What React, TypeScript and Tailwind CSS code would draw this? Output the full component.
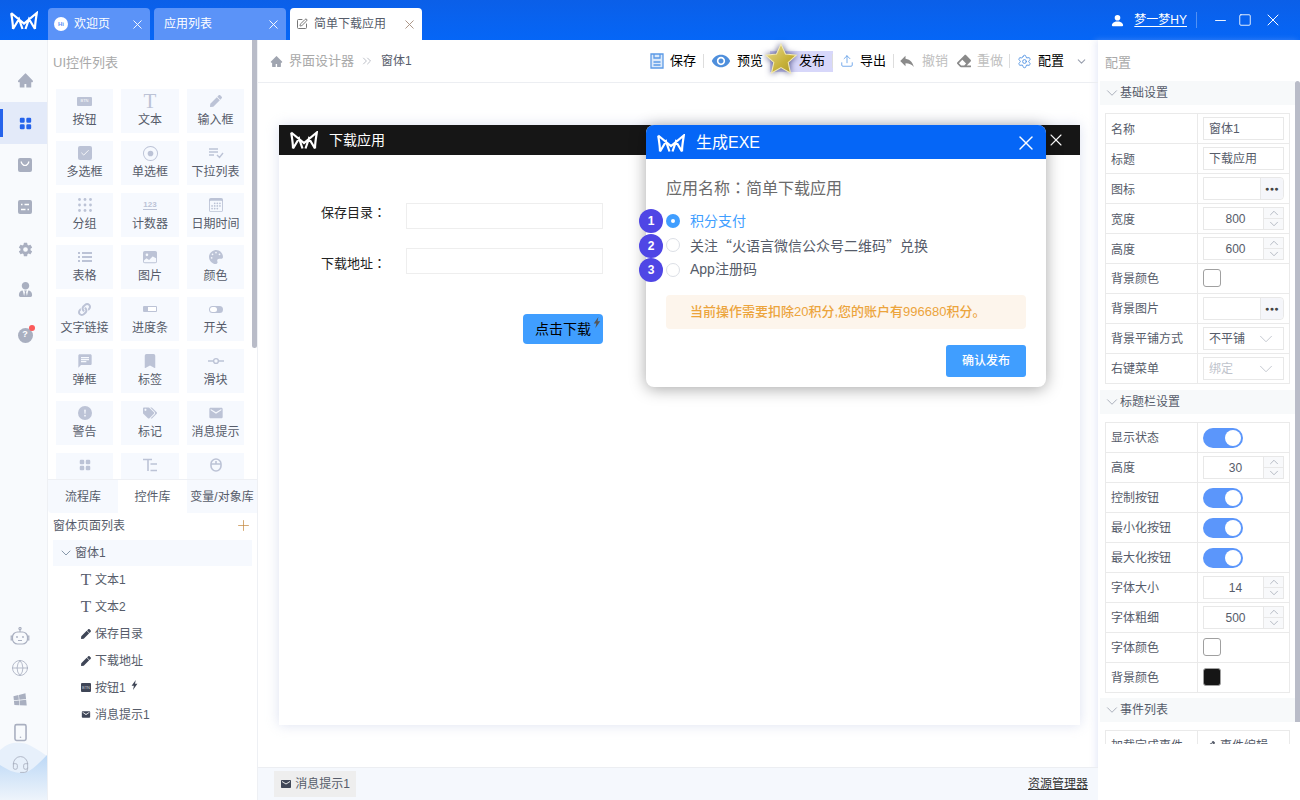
import React from 'react';
import { Check, ChevronDown, ChevronUp, ChevronsRight, Globe, Headset, Minus, Plus, Settings, Smartphone, Square, SquarePen, Upload, X } from 'lucide-react';
import { AiFillHome } from 'react-icons/ai';
import { BsBookmarkFill, BsCalendar3, BsExclamationCircleFill, BsGridFill, BsImageFill, BsPersonFill, BsRecordCircle } from 'react-icons/bs';
import { FaEraser, FaLink, FaPalette, FaPen, FaTags, FaUserTie, FaWindows } from 'react-icons/fa';
import { IoSettingsSharp } from 'react-icons/io5';
import { MdChat, MdEmail, MdReply, MdVisibility } from 'react-icons/md';

const Logo = ({ className }: { className?: string }) => (
    <svg viewBox="0 0 28 18" className={className} fill="none" stroke="currentColor" strokeWidth="2.2" strokeLinejoin="miter">
        <path d="M1.2 1.5 C2 7 3 12 3 17.5 M1.2 1.5 L14 12 L26.8 1.5 C26 7 25 12 25 17.5 M3 17.5 L9 7.5 L12.5 17.5 M25 17.5 L19 7.5 L15.5 17.5" />
    </svg>
);

const BtnIcon = ({ dark }: { dark?: boolean }) => (
    <span className={`flex h-[9px] w-[15px] items-center justify-center rounded-[1px] text-[4px] leading-none ${dark ? 'bg-[#3f4657] text-[#c8ccd6]' : 'bg-[#bcc3d6] text-white'}`}>BTN</span>
);

const SerifT = ({ className }: { className?: string }) => <span className={`font-['Liberation_Serif',serif] leading-none ${className}`}>T</span>;

const G = 'text-[#bcc3d6]';

const controls: Array<{ label: string; icon: React.ReactNode }> = [
    { label: '按钮', icon: <BtnIcon /> },
    { label: '文本', icon: <SerifT className={`text-[21px] ${G}`} /> },
    { label: '输入框', icon: <FaPen size={12} className={G} /> },
    { label: '多选框', icon: <span className="flex h-[14px] w-[14px] items-center justify-center rounded-[2px] bg-[#bcc3d6]"><Check size={10} strokeWidth={2} className="text-white" /></span> },
    { label: '单选框', icon: <BsRecordCircle size={15} className={G} /> },
    { label: '下拉列表', icon: <svg viewBox="0 0 16 12" className="h-3 w-4" fill="none" stroke="#bcc3d6" strokeWidth="1.4"><path d="M1 2h9M1 5h9M1 8h5M9 8l2.5 2.5L15 6" /></svg> },
    { label: '分组', icon: <svg viewBox="0 0 14 14" className="h-[14px] w-[14px]" fill="#bcc3d6">{[1.5, 7, 12.5].flatMap(y => [1.5, 7, 12.5].map(x => <circle key={`${x}-${y}`} cx={x} cy={y} r="1.4" />))}</svg> },
    { label: '计数器', icon: <span className="border-b border-[#bcc3d6] text-[8px] leading-[9px] font-bold text-[#bcc3d6]">123</span> },
    { label: '日期时间', icon: <BsCalendar3 size={14} className={G} /> },
    { label: '表格', icon: <svg viewBox="0 0 14 12" className="h-3 w-[14px]" fill="#bcc3d6"><path d="M0 1h2v2H0zM4 1h10v2H4zM0 5h2v2H0zM4 5h10v2H4zM0 9h2v2H0zM4 9h10v2H4z" /></svg> },
    { label: '图片', icon: <BsImageFill size={14} className={G} /> },
    { label: '颜色', icon: <FaPalette size={14} className={G} /> },
    { label: '文字链接', icon: <FaLink size={13} className={G} /> },
    { label: '进度条', icon: <span className="flex h-[6px] w-[14px] justify-end rounded-[1px] bg-[#bcc3d6] p-px"><span className="h-full w-2 bg-white" /></span> },
    { label: '开关', icon: <span className="flex h-[7px] w-[14px] items-center rounded-full bg-[#bcc3d6] p-px"><span className="h-[5px] w-[7px] rounded-full bg-white" /></span> },
    { label: '弹框', icon: <MdChat size={16} className={G} /> },
    { label: '标签', icon: <BsBookmarkFill size={14} className={G} /> },
    { label: '滑块', icon: <svg viewBox="0 0 16 8" className="h-2 w-4" fill="none" stroke="#bcc3d6" strokeWidth="1.4"><path d="M0 4h5M11 4h5" /><circle cx="8" cy="4" r="2.4" /></svg> },
    { label: '警告', icon: <BsExclamationCircleFill size={14} className={G} /> },
    { label: '标记', icon: <FaTags size={14} className={G} /> },
    { label: '消息提示', icon: <MdEmail size={16} className={G} /> },
    { label: '', icon: <BsGridFill size={12} className={G} /> },
    { label: '', icon: <svg viewBox="0 0 14 14" className="h-[14px] w-[14px]" fill="none" stroke="#bcc3d6" strokeWidth="1.6"><path d="M0 1.5h9M5 1.5V13M7.5 6H14M7.5 12.5H14" /></svg> },
    { label: '', icon: <svg viewBox="0 0 12 14" className="h-[14px] w-3" fill="none" stroke="#bcc3d6" strokeWidth="1.6"><rect x="1" y="1" width="10" height="12" rx="5" /><path d="M1 6h10M6 3v3" /></svg> },
];

const treeItems: Array<{ label: string; icon: React.ReactNode; bolt?: boolean }> = [
    { label: '文本1', icon: <SerifT className="text-[17px] text-[#5a6170]" /> },
    { label: '文本2', icon: <SerifT className="text-[17px] text-[#5a6170]" /> },
    { label: '保存目录', icon: <FaPen size={10} className="text-[#3f4657]" /> },
    { label: '下载地址', icon: <FaPen size={10} className="text-[#3f4657]" /> },
    { label: '按钮1', icon: <BtnIcon dark />, bolt: true },
    { label: '消息提示1', icon: <MdEmail size={13} className="text-[#3f4657]" /> },
];

const Bolt = ({ className }: { className?: string }) => (
    <svg viewBox="0 0 8 12" className={className} fill="currentColor"><path d="M5.5 0 0.5 7h2.8L2.2 12 7.5 4.6H4.6z" /></svg>
);

const Sep = ({ className }: { className?: string }) => <span className={`block h-[14px] w-px shrink-0 bg-[#ddd] ${className ?? ''}`} />;

const ToolBtn = ({ icon, label, disabled }: { icon: React.ReactNode; label: string; disabled?: boolean }) => (
    <span className={`flex items-center gap-[6px] text-[13px] ${disabled ? 'text-[#c0c0c0]' : 'text-black'}`}>
        {icon}
        {label}
    </span>
);

const Row = ({ label, lower, children }: { label: string; lower?: boolean; children?: React.ReactNode }) => (
    <div className="-mt-px flex h-[31px] border border-[#eaeaea] text-[12px] text-[#565c6a]">
        <div className={`flex w-[92px] items-center border-r border-[#eaeaea] pl-[5px] ${lower ? 'pt-[2px]' : ''}`}>{label}</div>
        <div className="flex flex-1 items-center pl-[5px]">{children}</div>
    </div>
);

const TextBox = ({ value }: { value: string }) => (
    <div className="flex h-[23px] w-[81px] items-center border border-[#e8e8e8] pl-[5px] text-[12px] text-[#565c6a]">{value}</div>
);

const PickBox = () => (
    <div className="flex h-[23px] w-[81px] justify-end rounded-r-[4px] border border-[#e8e8e8]">
        <span className="flex w-[23px] items-center justify-center rounded-r-[4px] border-l border-[#e8e8e8] bg-[#f5f6fa] text-[7px] leading-none tracking-[0.5px] text-[#444]">●●●</span>
    </div>
);

const SpinBox = ({ value }: { value: number }) => (
    <div className="flex h-[23px] w-[81px] border border-[#e8e8e8] text-[12px] text-[#565c6a]">
        <span className="flex flex-1 items-center justify-center pl-1 text-[12px]">{value}</span>
        <span className="flex w-[20px] flex-col border-l border-[#e8e8e8] bg-[#f8f9fb] text-[#9aa0ae]">
            <span className="flex h-[11px] items-center justify-center overflow-hidden border-b border-[#e8e8e8]"><ChevronUp size={14} strokeWidth={1.2} className="shrink-0" /></span>
            <span className="flex h-[10px] items-center justify-center overflow-hidden"><ChevronDown size={14} strokeWidth={1.2} className="shrink-0" /></span>
        </span>
    </div>
);

const SelectBox = ({ value, muted }: { value: string; muted?: boolean }) => (
    <div className={`flex h-[23px] w-[81px] items-center justify-between border border-[#e8e8e8] pr-[6px] pl-[5px] text-[12px] ${muted ? 'text-[#c0c4cc]' : 'text-[#565c6a]'}`}>
        {value}
        <ChevronDown size={22} strokeWidth={1} className="text-[#c0c4cc]" />
    </div>
);

const Toggle = () => (
    <span className="flex h-5 w-10 items-center justify-end rounded-full bg-[#5b96fb] pr-[2px]">
        <span className="h-4 w-4 rounded-full bg-white" />
    </span>
);

const Swatch = ({ dark }: { dark?: boolean }) => (
    <span className={`mb-[2px] h-[18px] w-[18px] rounded-[3px] border border-[#a0a0a0] ${dark ? 'bg-[#161616]' : 'bg-white'}`} />
);

const Section = ({ title }: { title: string }) => (
    <div className="flex h-6 items-center bg-[#f7f9fa] pl-[3px] text-[12px] text-[#565c6a]">
        <ChevronDown size={18} strokeWidth={1.1} className="-mr-px text-[#9aa0ae]" />
        {title}
    </div>
);

const Badge = ({ n, className }: { n: number; className: string }) => (
    <span className={`absolute left-[-7px] flex h-6 w-6 items-center justify-center rounded-full bg-[#4f46e5] text-[12px] font-bold text-white ${className}`}>{n}</span>
);

const Colon = () => <span className="font-['Noto_Sans_CJK_TC',sans-serif]">：</span>;

export default function App() {
    const railTop = [
        { icon: <AiFillHome size={17} className="mb-[2px]" /> },
        { icon: <BsGridFill size={13} className="text-[#2563eb]" />, active: true },
        { icon: <svg viewBox="0 0 14 14" className="h-[14px] w-[14px]"><path fill="#a9afc0" d="M2 0h10a2 2 0 0 1 2 2v10a2 2 0 0 1-2 2H2a2 2 0 0 1-2-2V2a2 2 0 0 1 2-2z" /><path d="M3 3.5c1 3 2.5 4 4 4s3-1 4-4" fill="none" stroke="#fff" strokeWidth="1.2" /></svg> },
        { icon: <svg viewBox="0 0 14 14" className="h-[14px] w-[14px]"><rect width="14" height="14" rx="2" fill="#a9afc0" /><path d="M3 4.5h1.5M6.5 4.5H11M3 9.5h4.5M9.5 9.5H11" stroke="#fff" strokeWidth="1.6" /></svg> },
        { icon: <IoSettingsSharp size={15} /> },
    ];

    return (
        <div className="flex h-[800px] w-[1300px] flex-col overflow-hidden bg-white font-['Liberation_Sans','Noto_Sans_CJK_SC',sans-serif]">
            <header className="flex h-10 shrink-0 items-end bg-gradient-to-b from-[#0b5fe8] to-[#0566f7] text-white">
                <div className="flex h-10 w-12 items-center pl-[10px]"><Logo className="h-[19px] w-[28px] text-white" /></div>
                <div className="flex items-center gap-1">
                    <div className="flex h-8 w-[102px] items-center rounded-t-[4px] bg-[#5b93f8] pr-[5px] pl-[6px] text-[12px]">
                        <span className="mr-[6px] flex h-[14px] w-[14px] items-center justify-center rounded-full bg-white text-[6px] font-bold text-[#5b93f8]">Hi</span>
                        <span className="flex-1">欢迎页</span>
                        <X size={15} strokeWidth={1.5} />
                    </div>
                    <div className="flex h-8 w-[132px] items-center rounded-t-[4px] bg-[#5b93f8] pr-[5px] pl-[10px] text-[12px]">
                        <span className="flex-1">应用列表</span>
                        <X size={15} strokeWidth={1.5} />
                    </div>
                    <div className="flex h-8 w-[132px] items-center rounded-t-[4px] bg-white pr-[5px] pl-[6px] text-[12px] text-[#565c6a]">
                        <SquarePen size={12} className="mr-[6px] text-[#777]" />
                        <span className="flex-1">简单下载应用</span>
                        <X size={15} strokeWidth={1.5} className="text-[#a89080]" />
                    </div>
                </div>
                <div className="ml-auto flex h-10 items-center">
                    <BsPersonFill size={15} className="mr-[9px]" />
                    <span className="text-[12px] underline underline-offset-2">梦一梦HY</span>
                    <span className="ml-[9px] h-4 w-px bg-white/30" />
                    <Minus size={17} className="ml-[15px]" strokeWidth={1.3} />
                    <Square size={14} className="ml-[9px]" strokeWidth={1.5} />
                    <X size={20} className="mr-[17px] ml-[11px]" strokeWidth={1.2} />
                </div>
            </header>

            <div className="flex min-h-0 flex-1">
                {/* icon rail */}
                <nav className="relative flex w-12 shrink-0 flex-col border-r border-[#eef0f4] bg-[#f8fafd] pt-5 text-[#a9afc0]">
                    {railTop.map((item, i) => (
                        <div key={i} className={`relative flex h-[42px] items-center justify-center pl-[3px] ${item.active ? 'bg-[#e3eaf9]' : ''}`}>
                            {item.active && <span className="absolute top-[7px] left-0 h-[28px] w-[3px] bg-[#2563eb]" />}
                            {item.icon}
                        </div>
                    ))}
                    <div className="flex h-[38px] items-center justify-center pl-[3px]"><FaUserTie size={15} /></div>
                    <div className="mt-[7px] flex h-[40px] items-center justify-center pl-[3px]">
                        <span className="relative flex h-[15px] w-[15px] items-center justify-center rounded-full bg-[#a9afc0] text-[9px] font-bold text-white">
                            ?
                            <span className="absolute -top-[3px] -right-[2px] h-[6px] w-[6px] rounded-full bg-[#fb5a5a]" />
                        </span>
                    </div>
                    <svg viewBox="0 0 47 58" className="absolute bottom-0 left-0 h-[58px] w-[47px]" preserveAspectRatio="none">
                        <defs>
                            <linearGradient id="wave" x1="0" y1="0" x2="0" y2="1">
                                <stop offset="0" stopColor="#bcd8f6" />
                                <stop offset="1" stopColor="#eef4fb" />
                            </linearGradient>
                        </defs>
                        <path d="M0 8C8 1 14 0 22 1S38 8 47 14V58H0z" fill="#e7f0fb" />
                        <path d="M0 23C8 28 14 31 22 31S38 22 47 13V58H0z" fill="url(#wave)" />
                    </svg>
                    <div className="relative mt-auto flex flex-col items-center pr-[7px] pb-[20px]">
                        <span className="flex h-8 items-center">
                            <svg viewBox="0 0 20 18" className="h-[18px] w-5" fill="none" stroke="#a9afc0" strokeWidth="1.2">
                                <circle cx="10" cy="1.6" r="1.1" />
                                <path d="M10 2.7V5" />
                                <rect x="2.5" y="5" width="15" height="12" rx="5" />
                                <path d="M2.5 9H1.2v4h1.3M17.5 9h1.3v4h-1.3M8 13.5h4" />
                                <circle cx="7" cy="10" r="0.9" fill="#a9afc0" stroke="none" />
                                <circle cx="13" cy="10" r="0.9" fill="#a9afc0" stroke="none" />
                            </svg>
                        </span>
                        <span className="flex h-8 items-center"><Globe size={18} strokeWidth={1.1} /></span>
                        <span className="flex h-8 items-center"><FaWindows size={14} className="-rotate-6" /></span>
                        <span className="flex h-8 items-center"><Smartphone size={19} strokeWidth={2} /></span>
                        <span className="flex h-8 items-center"><Headset size={19} strokeWidth={1.1} /></span>
                    </div>
                </nav>

                {/* widget panel */}
                <aside className="flex w-[210px] shrink-0 flex-col border-r border-[#eef0f4]">
                    <div className="relative h-[440px] overflow-hidden border-b border-[#eef0f4]">
                        <span className="absolute top-0 right-0 h-[308px] w-[5px] rounded-b-[3px] bg-[#b9bcc8]" />
                        <div className="pt-[14px] pl-[5px] text-[13px] leading-[17px] text-[#a9a9a9]">UI控件列表</div>
                        <div className="mt-[18px] ml-2 grid w-[188px] grid-cols-[57px_58px_57px] gap-x-2 gap-y-2">
                            {controls.map((c, i) => (
                                <div key={i} className="flex h-11 flex-col items-center bg-[#f6f9fe] pt-[4px] text-[12px] leading-[16px] text-[#565c6a]">
                                    <span className="flex h-[16px] items-center justify-center">{c.icon}</span>
                                    <span className="mt-[3px]">{c.label}</span>
                                </div>
                            ))}
                        </div>
                    </div>
                    <div className="flex h-[33px] text-[12px] text-[#565c6a]">
                        <div className="flex w-[70px] items-center justify-center rounded-bl-[4px] bg-[#f6f9fe]">流程库</div>
                        <div className="flex w-[69px] items-center justify-center">控件库</div>
                        <div className="flex w-[70px] items-center justify-center bg-[#f6f9fe] whitespace-nowrap">变量/对象库</div>
                    </div>
                    <div className="flex h-[27px] items-center justify-between pr-[5px] pb-[2px] pl-[5px] text-[12px] text-[#565c6a]">
                        窗体页面列表
                        <Plus size={17} strokeWidth={1} className="text-[#c4873c]" />
                    </div>
                    <div className="mx-[5px] flex h-[26px] items-center bg-[#f6f9fe] pl-[5px] text-[12px] text-[#565c6a]">
                        <ChevronDown size={16} strokeWidth={1.2} className="mr-px text-[#6c8096]" />
                        窗体1
                    </div>
                    <div className="pl-[33px] text-[12px] text-[#565c6a]">
                        {treeItems.map(t => (
                            <div key={t.label} className="flex h-[27px] items-center">
                                <span className="mr-[4px] flex w-[10px] justify-center">{t.icon}</span>
                                <span>{t.label}</span>
                                {t.bolt && <Bolt className="mb-[5px] ml-[5px] h-[10px] w-[7px] text-[#3f4657]" />}
                            </div>
                        ))}
                    </div>
                </aside>

                {/* designer */}
                <main className="relative flex min-w-0 flex-1 flex-col">
                    <div className="flex h-[43px] shrink-0 items-center justify-between border-b border-[#eceef2] pr-[10px] pl-[12px]">
                        <div className="flex items-center text-[13px]">
                            <AiFillHome size={13} className="mr-[6px] text-[#a0a5b0]" />
                            <span className="text-[#a9a9a9]">界面设计器</span>
                            <ChevronsRight size={14} strokeWidth={1.2} className="mx-[6px] text-[#a0a5b0]" />
                            <span className="ml-[1px] text-[12px] text-[#565c6a]">窗体1</span>
                        </div>
                        <div className="flex items-center">
                            <ToolBtn
                                icon={
                                    <svg viewBox="0 0 14 16" className="h-4 w-[14px]" fill="none" stroke="#5c9ae6" strokeWidth="1.3">
                                        <path d="M1 1h12v14H1z" fill="#dbe9fa" />
                                        <path d="M4 1v4h6V1M3.5 9h7M3.5 12h7" />
                                    </svg>
                                }
                                label="保存"
                            />
                            <Sep className="mr-[7px] ml-[7px]" />
                            <ToolBtn icon={<MdVisibility size={20} className="text-[#4f8fdc]" />} label="预览" />
                            <span className="ml-[7px] flex h-[21px] w-[63px] items-center justify-end bg-[#d7d7fa] text-[13px] text-black">
                                发布
                                <Sep className="ml-[7px]" />
                            </span>
                            <span className="ml-[7px]"><ToolBtn icon={<Upload size={14} strokeWidth={1.4} className="text-[#5c9ae6]" />} label="导出" /></span>
                            <Sep className="mr-[4px] ml-[7px]" />
                            <ToolBtn icon={<MdReply size={18} className="text-[#8a8a8a]" />} label="撤销" disabled />
                            <span className="ml-[9px]"><ToolBtn icon={<FaEraser size={14} className="text-[#8a8a8a]" />} label="重做" disabled /></span>
                            <Sep className="mr-[7px] ml-[6px]" />
                            <ToolBtn icon={<Settings size={15} strokeWidth={1.6} className="text-[#5c9ae6]" />} label="配置" />
                            <ChevronDown size={13} className="ml-[11px] text-[#9aa0ae]" />
                        </div>
                    </div>

                    <div className="min-h-0 flex-1 pt-[42px] pl-[21px]">
                        <div className="h-[600px] w-[801px] bg-white shadow-[0_0_12px_rgba(180,190,225,0.45)]">
                            <div className="flex h-[30px] items-center justify-between bg-[#161616] pr-[14px] pl-[11px] text-white">
                                <span className="flex items-center text-[14px]"><Logo className="mr-[11px] h-[18px] w-[28px]" />下载应用</span>
                                <X size={20} strokeWidth={1.3} />
                            </div>
                            <div className="w-[324px] pt-[48px] pl-[42px] text-[13px] text-[#222]">
                                <div className="flex h-[26px]">
                                    <span className="w-[85px] leading-[18px]">保存目录<Colon /></span>
                                    <span className="h-[26px] w-[197px] border border-[#eee]" />
                                </div>
                                <div className="mt-[19px] flex h-[26px]">
                                    <span className="w-[85px] leading-[29px]">下载地址<Colon /></span>
                                    <span className="h-[26px] w-[197px] border border-[#eee]" />
                                </div>
                                <div className="mt-10 flex justify-end">
                                    <span className="relative flex h-[30px] w-20 items-center rounded-[4px] bg-[#409eff] pl-3 text-[14px] text-black">
                                        点击下载
                                        <Bolt className="absolute top-[3px] right-[2px] h-[11px] w-[8px] text-[#555]" />
                                    </span>
                                </div>
                            </div>
                        </div>
                    </div>

                    <div className="flex h-[33px] shrink-0 items-center justify-between border-t border-[#eceef2] bg-[#f5f8fd] pr-[10px] pl-4 text-[12px]">
                        <span className="flex h-[26px] w-[82px] items-center justify-center gap-[3px] bg-[#eeeeee] text-[#565c6a]"><MdEmail size={12} className="text-[#3f4657]" />消息提示1</span>
                        <span className="text-[#333] underline">资源管理器</span>
                    </div>

                    {/* star pointer */}
                    <svg viewBox="0 0 32 32" className="absolute top-[2px] left-[506px] h-[34px] w-[34px] drop-shadow-[0_0_3px_rgba(30,30,90,0.8)]">
                        <defs>
                            <linearGradient id="star" x1="0" y1="0" x2="1" y2="1">
                                <stop offset="0" stopColor="#e9dc92" />
                                <stop offset="0.6" stopColor="#c8b23a" />
                                <stop offset="1" stopColor="#a8952c" />
                            </linearGradient>
                        </defs>
                        <path d="M16 2l4.2 9.3 10.2 1.1-7.6 6.8 2.1 10L16 24.1 7.1 29.2l2.1-10-7.6-6.8 10.2-1.1z" fill="url(#star)" stroke="#f3eab4" strokeWidth="1" />
                    </svg>

                    {/* publish dialog */}
                    <div className="absolute top-[85px] left-[388px] h-[262px] w-[400px] rounded-[8px] bg-white shadow-[0_2px_16px_rgba(0,0,0,0.35)]">
                        <div className="flex h-[34px] items-center justify-between rounded-t-[8px] bg-[#0566f7] pr-[8px] pl-[11px] text-white">
                            <span className="flex items-center pt-[1px] text-[16px]"><Logo className="mr-[11px] h-[18px] w-[28px]" />生成EXE</span>
                            <X size={24} strokeWidth={1.4} className="mt-[2px]" />
                        </div>
                        <div className="relative px-5">
                            <div className="pt-[18px] text-[16px] leading-[21px] text-[#6b6b6b]">应用名称<Colon />简单下载应用</div>
                            <div className="mt-[10px] text-[14px] text-[#565c6a]">
                                <div className="flex h-[24px] items-center text-[#409eff]">
                                    <span className="mr-[10px] flex h-[14px] w-[14px] items-center justify-center rounded-full bg-[#409eff]"><span className="h-1 w-1 rounded-full bg-white" /></span>
                                    积分支付
                                </div>
                                <div className="flex h-[24px] items-center font-['Noto_Sans_CJK_SC',sans-serif]">
                                    <span className="mr-[10px] h-[14px] w-[14px] rounded-full border border-[#dcdfe6]" />
                                    关注“火语言微信公众号二维码”兑换
                                </div>
                                <div className="flex h-[25px] items-center">
                                    <span className="mr-[10px] h-[14px] w-[14px] rounded-full border border-[#dcdfe6]" />
                                    App注册码
                                </div>
                            </div>
                            <div className="mt-[13px] flex h-[34px] items-center rounded-[4px] bg-[#fdf5ec] pl-6 text-[13px] font-medium text-[#eca43c]">当前操作需要扣除20积分,您的账户有996680积分。</div>
                            <div className="mt-4 flex justify-end">
                                <span className="flex h-8 w-20 items-center justify-center rounded-[3px] bg-[#409eff] text-[12px] font-medium text-white">确认发布</span>
                            </div>
                        </div>
                        <Badge n={1} className="top-[84px]" />
                        <Badge n={2} className="top-[109px]" />
                        <Badge n={3} className="top-[133px]" />
                    </div>
                </main>

                {/* property panel */}
                <aside className="flex w-[202px] shrink-0 flex-col bg-white shadow-[-3px_0_6px_rgba(190,200,235,0.3)]">
                    <div className="h-[41px] pt-[14px] pl-[7px] text-[13px] leading-[17px] text-[#a9a9a9]">配置</div>
                    <div className="relative ml-[2px] h-[663px] overflow-hidden pr-[5px]">
                        <span className="absolute top-0 right-0 h-[641px] w-[5px] rounded-t-[3px] bg-[#b9bcc8]" />
                        <Section title="基础设置" />
                        <div className="mx-[5px] mt-[9px] mb-[6px]">
                            <Row lower label="名称"><TextBox value="窗体1" /></Row>
                            <Row lower label="标题"><TextBox value="下载应用" /></Row>
                            <Row lower label="图标"><PickBox /></Row>
                            <Row lower label="宽度"><SpinBox value={800} /></Row>
                            <Row lower label="高度"><SpinBox value={600} /></Row>
                            <Row label="背景颜色"><Swatch /></Row>
                            <Row label="背景图片"><PickBox /></Row>
                            <Row label="背景平铺方式"><SelectBox value="不平铺" /></Row>
                            <Row label="右键菜单"><SelectBox value="绑定" muted /></Row>
                        </div>
                        <Section title="标题栏设置" />
                        <div className="mx-[5px] mt-[9px] mb-[5px]">
                            <Row label="显示状态"><Toggle /></Row>
                            <Row label="高度"><SpinBox value={30} /></Row>
                            <Row label="控制按钮"><Toggle /></Row>
                            <Row label="最小化按钮"><Toggle /></Row>
                            <Row label="最大化按钮"><Toggle /></Row>
                            <Row label="字体大小"><SpinBox value={14} /></Row>
                            <Row label="字体粗细"><SpinBox value={500} /></Row>
                            <Row label="字体颜色"><Swatch /></Row>
                            <Row label="背景颜色"><Swatch dark /></Row>
                        </div>
                        <Section title="事件列表" />
                        <div className="mx-[5px] mt-[9px]">
                            <Row label="加载完成事件"><span className="flex items-center gap-[5px] pl-[3px]"><FaPen size={9} />事件编辑</span></Row>
                        </div>
                    </div>
                </aside>
            </div>
        </div>
    );
}
